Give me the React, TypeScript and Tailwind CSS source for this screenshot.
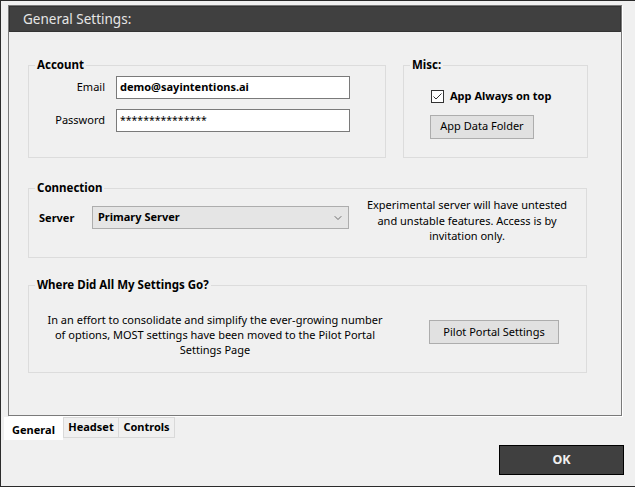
import { ChevronDown } from "lucide-react"

const font = "font-['Noto_Sans',sans-serif]"

function Group(props: { title: string; className?: string; children: React.ReactNode }) {
  return (
    <fieldset className={`min-w-0 border border-[#dcdcdc] ${props.className ?? ""}`}>
      <legend className="ml-[6px] px-[2px] text-[11.5px] font-bold leading-[16px] text-black">
        {props.title}
      </legend>
      {props.children}
    </fieldset>
  )
}

function Button(props: { label: string; className?: string }) {
  return (
    <button className={`border border-[#adadad] bg-[#e1e1e1] text-[11px] text-black ${props.className ?? ""}`}>
      {props.label}
    </button>
  )
}

export default function App() {
  return (
    <div className={`${font} flex h-[487px] w-[635px] flex-col border-y border-l border-[#2b2b2b] bg-[#f0f0f0] text-[11px] text-black`}>
      <div className="ml-[7px] mt-[4px] h-[411px] w-[614px] border border-[#7a7a7a] bg-[#f0f0f0] shadow-[1px_1px_0_#ffffff]">
        <div className="flex h-[26px] items-center border border-[#333] bg-[#404040] pl-[13px] text-[13.5px] text-[#e6e6e6]">
          General Settings:
        </div>

        <div className="flex flex-col px-[19px] pt-[25px]">
          <div className="flex gap-[17px]">
            <Group title="Account" className="h-[101px] w-[358px]">
              <div className="grid grid-cols-[76px_234px] items-center gap-x-[11px] gap-y-[10px] pt-[3px]">
                <span className="text-right">Email</span>
                <div className="flex h-[23px] items-center border border-[#7a7a7a] bg-white px-[3px] font-bold">
                  demo@sayintentions.ai
                </div>
                <span className="text-right">Password</span>
                <div className="flex h-[23px] items-center border border-[#7a7a7a] bg-white px-[3px] text-[10.5px] leading-none">
                  ***************
                </div>
              </div>
            </Group>

            <Group title="Misc:" className="h-[101px] w-[185px]">
              <div className="flex flex-col pl-[27px] pt-[15px]">
                <label className="flex items-center gap-[6px] font-bold">
                  <span className="flex h-[13px] w-[13px] items-center justify-center border border-[#333] bg-white">
                    <svg viewBox="0 0 11 11" className="h-[11px] w-[11px]">
                      <path d="M1.5 5.5 L4 8 L9.5 2.5" fill="none" stroke="#333" strokeWidth="1" />
                    </svg>
                  </span>
                  App Always on top
                </label>
                <Button label="App Data Folder" className="mt-[10px] h-[24px] w-[104px] -ml-[1px]" />
              </div>
            </Group>
          </div>

          <Group title="Connection" className="mt-[22px] h-[78px] w-[559px]">
            <div className="flex items-start pl-[10px]">
              <span className="mt-[14px] w-[53px] font-bold">Server</span>
              <div className="mt-[10px] flex h-[23px] w-[257px] items-center justify-between border border-[#adadad] bg-[#e5e5e5] pl-[5px] pr-[4px] font-bold">
                Primary Server
                <ChevronDown className="h-[12px] w-[12px] text-[#444]" strokeWidth={1.5} />
              </div>
              <p className="ml-[8px] mt-[1px] w-[220px] text-center leading-[15.5px]">
                Experimental server will have untested and unstable features. Access is by invitation only.
              </p>
            </div>
          </Group>

          <Group title="Where Did All My Settings Go?" className="mt-[19px] h-[96px] w-[559px]">
            <div className="flex items-start">
              <p className="mt-[19px] ml-[16px] w-[340px] text-center leading-[15px]">
                In an effort to consolidate and simplify the ever-growing number of options, MOST settings have been moved to the Pilot Portal Settings Page
              </p>
              <Button label="Pilot Portal Settings" className="ml-[44px] mt-[27px] h-[24px] w-[130px]" />
            </div>
          </Group>
        </div>
      </div>

      <div className="ml-[3px] mt-px flex items-start">
        <div className="flex h-[23px] w-[59px] items-center justify-center bg-white pt-[3px] font-bold">General</div>
        <div className="flex h-[21px] w-[56px] items-center justify-center border border-[#d9d9d9] font-bold">Headset</div>
        <div className="flex h-[21px] w-[56px] items-center justify-center border border-l-0 border-[#d9d9d9] font-bold">Controls</div>
      </div>

      <div className="mr-[11px] mt-[5px] flex justify-end">
        <button className="h-[30px] w-[125px] border border-black bg-[#404040] text-[12.5px] font-bold text-[#f0f0f0]">
          OK
        </button>
      </div>
    </div>
  )
}
